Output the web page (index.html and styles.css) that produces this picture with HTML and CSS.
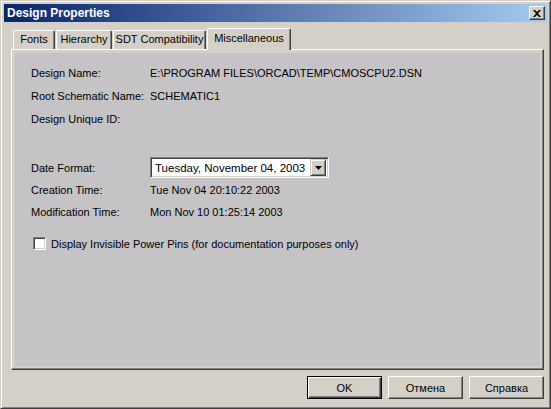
FILE: index.html
```html
<!DOCTYPE html>
<html lang="en">
<head>
  <meta charset="UTF-8" />
  <title>Design Properties</title>
  <link rel="stylesheet" href="styles.css">
</head>
<body>

  <div class="window">
    <!-- barra de título -->
    <div class="titlebar">
      <span class="title">Design Properties</span>
      <div class="close-btn">
        <svg width="8" height="7" viewBox="0 0 8 7">
          <path d="M0 0h2l2 2 2-2h2L5 3.5 8 7H6L4 5 2 7H0l3-3.5z" fill="#000"/>
        </svg>
      </div>
    </div>

    <!-- abas -->
    <div class="tabs">
      <div class="tab tab-fonts">Fonts</div>
      <div class="tab tab-hier">Hierarchy</div>
      <div class="tab tab-sdt">SDT Compatibility</div>
      <div class="tab tab-misc active">Miscellaneous</div>
    </div>

    <div class="panel">
      <div class="page">
        <div class="row"><span class="lbl">Design Name:</span><span>E:\PROGRAM FILES\ORCAD\TEMP\CMOSCPU2.DSN</span></div>
        <div class="row"><span class="lbl">Root Schematic Name:</span><span>SCHEMATIC1</span></div>
        <div class="row"><span class="lbl">Design Unique ID:</span><span></span></div>

        <div class="row date-row">
          <span class="lbl">Date Format:</span>
          <div class="combo">
            <span class="combo-text">Tuesday, November 04, 2003</span>
            <div class="combo-btn">
              <svg width="7" height="4" viewBox="0 0 7 4"><path d="M0 0h7L3.5 4z" fill="#000"/></svg>
            </div>
          </div>
        </div>
        <div class="row small"><span class="lbl">Creation Time:</span><span>Tue Nov 04 20:10:22 2003</span></div>
        <div class="row small"><span class="lbl">Modification Time:</span><span>Mon Nov 10 01:25:14 2003</span></div>

        <div class="check-row">
          <div class="checkbox"></div>
          <span>Display Invisible Power Pins (for documentation purposes only)</span>
        </div>
      </div>
    </div>

    <!-- botões -->
    <div class="buttons">
      <div class="btn default">OK</div>
      <div class="btn">Отмена</div>
      <div class="btn">Справка</div>
    </div>
  </div>

</body>
</html>
```

FILE: styles.css
```css
/* Reset básico */
* { box-sizing: border-box; margin: 0; padding: 0; }

body {
  font-family: 'Liberation Sans', Arial, sans-serif;
  font-size: 11px;
  color: #000;
  background: #D4D0C8;
}

/* Janela estilo Windows 2000 */
.window {
  width: 551px;
  height: 409px;
  background: #D4D0C8;
  border: 1px solid;
  border-color: #D4D0C8 #404040 #404040 #D4D0C8;
  box-shadow: inset 1px 1px #fff, inset -1px -1px #808080;
  padding: 3px;
  display: flex;
  flex-direction: column;
}

.titlebar {
  height: 18px;
  background: linear-gradient(to right, #0A246A, #A6CAF0);
  display: flex;
  align-items: center;
  justify-content: space-between;
  padding: 0 2px 0 3px;
}
.title {
  color: #fff;
  font-weight: bold;
  font-size: 12px;
}
.close-btn {
  width: 16px;
  height: 14px;
  background: #D4D0C8;
  border: 1px solid;
  border-color: #fff #404040 #404040 #fff;
  box-shadow: inset -1px -1px #808080;
  display: flex;
  align-items: center;
  justify-content: center;
}

/* Abas */
.tabs {
  display: flex;
  align-items: flex-end;
  height: 21px;
  margin: 6px 0 0 7px;
  padding-left: 2px;
  gap: 1px;
}
.tab {
  height: 19px;
  line-height: 17px;
  text-align: center;
  border: 1px solid;
  border-bottom: none;
  border-color: #fff #404040 #404040 #fff;
  box-shadow: inset -1px 0 #808080;
  border-radius: 2px 2px 0 0;
  background: #D4D0C8;
  white-space: nowrap;
}
.tab-fonts { width: 42px; }
.tab-hier { width: 56px; }
.tab-sdt { width: 93px; }
.tab-misc { width: 84px; }
.tab.active {
  height: 22px;
  line-height: 19px;
  margin-bottom: -1px;
  position: relative;
  z-index: 1;
}

.panel {
  flex: 1;
  margin: 0 3px 0 7px;
  border: 1px solid;
  border-color: #fff #404040 #404040 #fff;
  box-shadow: inset -1px -1px #808080;
  padding: 3px;
  display: flex;
}
.page {
  flex: 1;
  background: #C5C3C6;
  padding: 8px 0 0 16px;
}

.row {
  display: flex;
  align-items: center;
  height: 23px;
}
.row.small { height: 22px; }
.lbl { width: 119px; flex-shrink: 0; }
.date-row { margin-top: 26px; }

/* Combo box */
.combo {
  width: 179px;
  height: 21px;
  background: #fff;
  border: 1px solid;
  border-color: #808080 #fff #fff #808080;
  box-shadow: inset 1px 1px #404040, inset -1px -1px #D4D0C8;
  display: flex;
  align-items: center;
  justify-content: space-between;
  padding: 2px;
}
.combo-text {
  padding-left: 2px;
  font-size: 11.5px;
  white-space: nowrap;
}
.combo-btn {
  width: 16px;
  height: 17px;
  flex-shrink: 0;
  background: #D4D0C8;
  border: 1px solid;
  border-color: #D4D0C8 #404040 #404040 #D4D0C8;
  box-shadow: inset 1px 1px #fff, inset -1px -1px #808080;
  display: flex;
  align-items: center;
  justify-content: center;
}

.check-row {
  display: flex;
  align-items: center;
  gap: 5px;
  margin: 14px 0 0 2px;
}
.checkbox {
  width: 13px;
  height: 13px;
  background: #fff;
  border: 1px solid;
  border-color: #808080 #fff #fff #808080;
  box-shadow: inset 1px 1px #404040, inset -1px -1px #D4D0C8;
}

/* Botões */
.buttons {
  display: flex;
  justify-content: flex-end;
  gap: 6px;
  margin: 6px 3px 6px 0;
}
.btn {
  width: 75px;
  height: 23px;
  display: flex;
  align-items: center;
  justify-content: center;
  background: #D4D0C8;
  border: 1px solid;
  border-color: #fff #404040 #404040 #fff;
  box-shadow: inset -1px -1px #808080;
}
.btn.default {
  border: 1px solid #000;
  box-shadow: inset 1px 1px #fff, inset -1px -1px #404040, inset -2px -2px #808080;
}
```
